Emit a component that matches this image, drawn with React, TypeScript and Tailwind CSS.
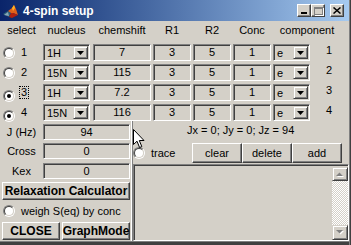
import React from "react";

const rows = [
  { n: "1", nuc: "1H", cs: "7", checked: false },
  { n: "2", nuc: "15N", cs: "115", checked: false },
  { n: "3", nuc: "1H", cs: "7.2", checked: true, focus: true },
  { n: "4", nuc: "15N", cs: "116", checked: true },
];

const Radio = ({ checked }: { checked?: boolean }) => (
  <span className="inline-flex w-[12px] h-[12px] shrink-0 rounded-full border border-t-[#808080] border-l-[#808080] border-r-white border-b-white">
    <span className="flex items-center justify-center w-full h-full rounded-full bg-white border border-t-[#404040] border-l-[#404040] border-r-[#d4d0c8] border-b-[#d4d0c8]">
      {checked && <span className="w-[4px] h-[4px] rounded-full bg-black" />}
    </span>
  </span>
);

const Edit = ({ value, className }: { value: string; className: string }) => (
  <div
    className={`flex items-center justify-center border border-t-[#808080] border-l-[#808080] border-r-white border-b-white shadow-[inset_1px_1px_0_#404040] text-[11px] leading-none ${className}`}
  >
    {value}
  </div>
);

const Popup = ({ value, className }: { value: string; className: string }) => (
  <div
    className={`flex items-stretch border border-t-[#808080] border-l-[#808080] border-r-white border-b-white shadow-[inset_1px_1px_0_#404040] ${className}`}
  >
    <span className="flex-1 flex items-center pl-[3px] pt-[1px] text-[11px] leading-none">{value}</span>
    <span className="my-[1px] mr-[1px] w-[15px] flex items-center justify-center border border-t-[#d4d0c8] border-l-[#d4d0c8] border-r-[#404040] border-b-[#404040] shadow-[inset_1px_1px_0_#ffffff,inset_-1px_-1px_0_#808080]">
      <svg width="7" height="4" viewBox="0 0 7 4">
        <path d="M0 0h7L3.5 4z" fill="#000" />
      </svg>
    </span>
  </div>
);

const Button = ({ label, className }: { label: string; className: string }) => (
  <div
    className={`flex items-center justify-center border border-t-white border-l-white border-r-[#404040] border-b-[#404040] shadow-[inset_-1px_-1px_0_#808080] ${className}`}
  >
    {label}
  </div>
);

const Caption = ({ children, className = "" }: { children: React.ReactNode; className?: string }) => (
  <div className={`w-[14px] h-[13px] flex items-center justify-center bg-[#d4d0c8] border border-t-white border-l-white border-r-[#404040] border-b-[#404040] shadow-[inset_-1px_-1px_0_#808080] ${className}`}>
    {children}
  </div>
);

export default function App() {
  return (
    <div className="w-[351px] h-[245px] flex bg-[#d4d0c8] overflow-hidden font-['Liberation_Sans',Arial,sans-serif] text-black select-none">
      <div className="w-[349px] flex flex-col">
        {/* title bar */}
        <div className="h-[21px] flex items-center bg-linear-to-r from-[#0a246a] to-[#a6caf0]">
          <svg className="ml-[3px]" width="16" height="16" viewBox="0 0 16 16">
            <path d="M0 11 L5 8 L8 10 L6 14 Z" fill="#2d5f78" />
            <path d="M5 8 L9 5 L11 2 L13 6 L15 12 L10 10 L8 10 Z" fill="#e0601a" />
            <path d="M9 5 L11 2 L12 5 L10 8 Z" fill="#ffb020" />
            <path d="M8 10 L10 10 L15 12 L9 15 L6 14 Z" fill="#b02010" />
            <path d="M1 12 L5 9 L6 13 Z" fill="#88a8b8" />
          </svg>
          <span className="ml-[4px] text-white font-bold text-[12px] leading-none">4-spin setup</span>
          <div className="ml-auto flex items-center mr-[5px]">
            <Caption>
              <span className="mt-[5px] -ml-[1px] w-[6px] h-[2px] bg-black" />
            </Caption>
            <Caption>
              <span className="w-[9px] h-[8px] border border-t-2 border-[#808080] shadow-[1px_1px_0_#ffffff]" />
            </Caption>
            <Caption className="ml-[5px]">
              <svg width="8" height="7" viewBox="0 0 8 7">
                <path d="M0.5 0.5 L7.5 6.5 M7.5 0.5 L0.5 6.5" stroke="#000" strokeWidth="1.5" />
              </svg>
            </Caption>
          </div>
        </div>

        {/* header */}
        <div className="h-[19px] flex items-center text-[11px] leading-none">
          <span className="w-[43px] text-center">select</span>
          <span className="w-[47px] text-center">nucleus</span>
          <span className="ml-[3px] w-[58px] text-center">chemshift</span>
          <span className="ml-[2px] w-[38px] text-center">R1</span>
          <span className="ml-[2px] w-[38px] text-center">R2</span>
          <span className="ml-[2px] w-[38px] text-center">Conc</span>
          <span className="ml-[2px] w-[68px] text-center">component</span>
        </div>

        {/* spin rows */}
        <div className="mt-[4px] flex flex-col gap-[3px]">
          {rows.map((r) => (
            <div key={r.n} className="h-[17px] flex items-stretch">
              <div className="w-[43px] flex items-center">
                <span className="ml-[3px]">
                  <Radio checked={r.checked} />
                </span>
                <span
                  className={`ml-[5px] text-[11px] leading-[11px] px-[1px] ${r.focus ? "outline outline-1 outline-dotted outline-black" : ""}`}
                >
                  {r.n}
                </span>
              </div>
              <Popup value={r.nuc} className="w-[47px]" />
              <Edit value={r.cs} className="ml-[3px] w-[58px]" />
              <Edit value="3" className="ml-[2px] w-[38px]" />
              <Edit value="5" className="ml-[2px] w-[38px]" />
              <Edit value="1" className="ml-[2px] w-[38px]" />
              <Popup value="e" className="ml-[2px] w-[37px]" />
              <span className="ml-[16px] text-[11px] leading-[13px] self-start">{r.n}</span>
            </div>
          ))}
        </div>

        {/* lower area */}
        <div className="flex flex-1 min-h-0">
          <div className="w-[131px] flex flex-col">
            <div className="mt-[3px] h-[16px] flex items-stretch">
              <span className="w-[43px] flex items-center justify-center text-[11px] leading-none">J (Hz)</span>
              <Edit value="94" className="w-[87px]" />
            </div>
            <div className="mt-[3px] h-[16px] flex items-stretch">
              <span className="w-[43px] flex items-center justify-center text-[11px] leading-none">Cross</span>
              <Edit value="0" className="w-[87px]" />
            </div>
            <div className="mt-[4px] h-[16px] flex items-stretch">
              <span className="w-[43px] flex items-center justify-center text-[11px] leading-none">Kex</span>
              <Edit value="0" className="w-[87px]" />
            </div>
            <Button label="Relaxation Calculator" className="mt-[3px] ml-[2px] w-[128px] h-[18px] text-[12px] font-bold leading-none" />
            <div className="h-[22px] flex items-center">
              <span className="ml-[3px]">
                <Radio />
              </span>
              <span className="ml-[6px] text-[11px] leading-none">weigh S(eq) by conc</span>
            </div>
            <div className="h-[18px] flex">
              <Button label="CLOSE" className="ml-[2px] w-[58px] text-[12px] font-bold leading-none" />
              <Button label="GraphMode" className="ml-[2px] w-[68px] text-[12px] font-bold leading-none" />
            </div>
          </div>

          <div className="w-[2px] border-l border-l-white bg-[#808080]" />

          <div className="relative flex-1 flex flex-col">
            <div className="h-[18px] flex items-center pl-[54px] text-[11px] leading-none">
              Jx = 0; Jy = 0; Jz = 94
            </div>
            <div className="mt-[4px] h-[20px] flex items-stretch">
              <div className="w-[59px] flex items-center">
                <Radio />
                <span className="ml-[6px] text-[11px] leading-none">trace</span>
              </div>
              <Button label="clear" className="w-[50px] text-[11px] leading-none" />
              <Button label="delete" className="w-[50px] text-[11px] leading-none" />
              <Button label="add" className="w-[50px] text-[11px] leading-none" />
            </div>
            <div className="mt-[1px] h-[77px] flex border border-t-[#808080] border-l-[#808080] border-r-white border-b-white shadow-[inset_1px_1px_0_#404040]">
              <div className="flex-1" />
              <div className="w-[16px] mt-[2px] flex flex-col">
                <div className="h-[14px] flex items-center justify-center border border-t-[#d4d0c8] border-l-[#d4d0c8] border-r-[#404040] border-b-[#404040] bg-[#d4d0c8] shadow-[inset_1px_1px_0_#ffffff,inset_-1px_-1px_0_#808080]">
                  <svg width="8" height="5" viewBox="0 0 8 5">
                    <path d="M1 5h7L4.5 1.5z" fill="#fff" />
                    <path d="M0 4h7L3.5 0.5z" fill="#808080" />
                  </svg>
                </div>
                <div className="flex-1 bg-[repeating-conic-gradient(#ffffff_0%_25%,#d4d0c8_0%_50%)] bg-[length:2px_2px]" />
                <div className="h-[15px] flex items-center justify-center border border-t-[#d4d0c8] border-l-[#d4d0c8] border-r-[#404040] border-b-[#404040] bg-[#d4d0c8] shadow-[inset_1px_1px_0_#ffffff,inset_-1px_-1px_0_#808080]">
                  <svg width="8" height="5" viewBox="0 0 8 5">
                    <path d="M1 1h7L4.5 4.5z" fill="#fff" />
                    <path d="M0 0h7L3.5 3.5z" fill="#808080" />
                  </svg>
                </div>
              </div>
            </div>

            {/* mouse pointer */}
            <svg className="absolute left-0 top-[8px]" width="12" height="20" viewBox="0 0 12 20">
              <path d="M0.5 0.5 V15.5 L4 12.2 L6.6 18.5 L8.8 17.6 L6.3 11.5 H11 Z" fill="#fff" stroke="#000" strokeWidth="1" />
            </svg>
          </div>
        </div>

        <div className="h-[4px] border-t border-t-[#808080] bg-[#404040]" />
      </div>
      <div className="w-[2px] border-l border-l-[#808080] bg-[#404040]" />
    </div>
  );
}
